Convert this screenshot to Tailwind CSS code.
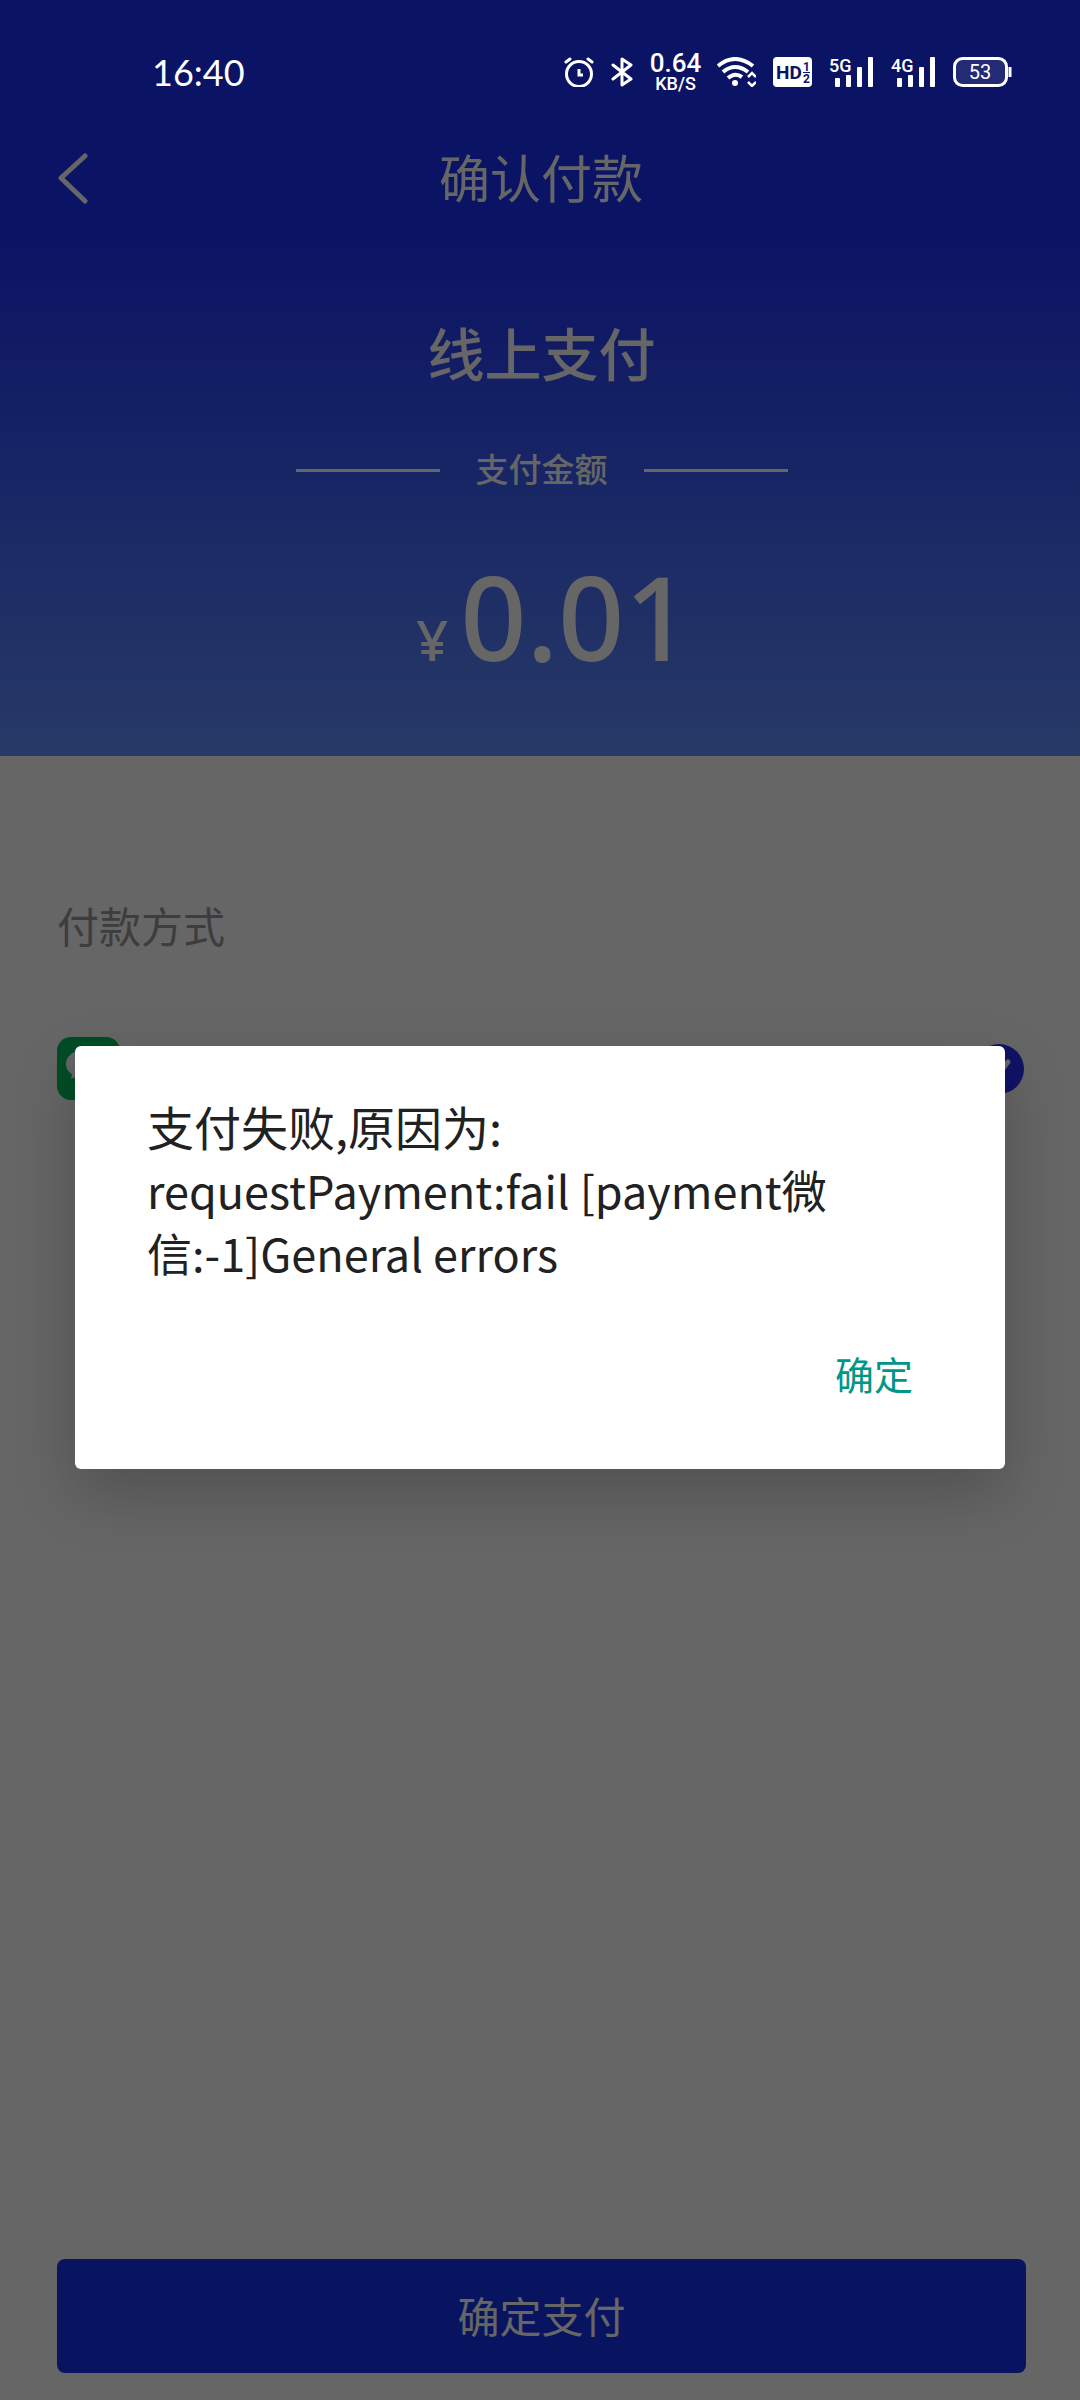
<!DOCTYPE html>
<html lang="zh-CN">
<head>
    <meta charset="UTF-8">
    <meta name="viewport" content="width=device-width, initial-scale=1.0">
    <title>确认付款</title>
    <script src="https://cdn.jsdelivr.net/npm/@tailwindcss/browser@4"></script>
</head>
<body class="bg-white font-['Noto_Sans','Noto_Sans_CJK_SC',sans-serif]">
    <div class="relative flex min-h-screen flex-col">

        <!-- Header -->
        <header class="flex h-[756px] flex-col bg-linear-to-b/srgb from-[#1b30fa] from-30% to-[#6391ff] text-white">
            <!-- Status bar, stays above the mask -->
            <div class="relative z-20 mt-10 flex h-16 items-center justify-between pr-[68px] pl-[152px]">
                <span class="font-['Lato','Noto_Sans',sans-serif] text-4xl leading-none">16:40</span>
                <div class="flex items-center gap-[17px]">
                    <svg class="h-[30px] w-[30px]" viewBox="0 0 30 30" fill="none" stroke="currentColor" stroke-width="3" stroke-linecap="round">
                        <circle cx="15" cy="17" r="12.5"/>
                        <path d="M15 12v6h4" stroke-linecap="butt"/>
                        <path d="M2 5l4-3M28 5l-4-3"/>
                    </svg>
                    <svg class="h-[30px] w-[23px]" viewBox="0 0 23 30" fill="none" stroke="currentColor" stroke-width="3" stroke-linejoin="round" stroke-linecap="round">
                        <path d="M2 8l18 14-9 6V2l9 6L2 22"/>
                    </svg>
                    <div class="flex w-[49px] flex-col items-center font-['Roboto',sans-serif] font-medium">
                        <span class="text-[26px] leading-6">0.64</span>
                        <span class="text-lg leading-[18px]">KB/S</span>
                    </div>
                    <svg class="h-[30px] w-[39px]" viewBox="0 0 39 30" fill="none" stroke="currentColor" stroke-width="4">
                        <path d="M1 9Q18-5 36 9M6 15q12-10 25 0M11 21q7-6 14-1"/>
                        <circle cx="18" cy="26" r="3" fill="currentColor" stroke="none"/>
                        <path d="M31 20l4-4 4 4M31 25l4 4 4-4" stroke-width="2.5"/>
                    </svg>
                    <svg class="h-[30px] w-[39px] font-['Roboto',sans-serif] font-bold" viewBox="0 0 39 30">
                        <rect width="39" height="30" rx="4" fill="#fff"/>
                        <text x="3" y="22" font-size="19" fill="#0b1364">HD</text>
                        <text x="30" y="14" font-size="12" fill="#0b1364">1</text>
                        <text x="30" y="26" font-size="12" fill="#0b1364">2</text>
                        <path d="M30 15.500h7" stroke="#0b1364"/>
                    </svg>
                    <svg class="h-[30px] w-[45px] overflow-visible font-['Roboto',sans-serif] font-medium" viewBox="0 0 45 30" fill="currentColor">
                        <text x="0" y="15" font-size="18">5G</text>
                        <rect x="6" y="21" width="5" height="9" rx="1"/>
                        <rect x="17" y="18" width="5" height="12" rx="1"/>
                        <rect x="28" y="10" width="5" height="20" rx="1"/>
                        <rect x="39" width="5" height="30" rx="1"/>
                    </svg>
                    <svg class="h-[30px] w-[45px] overflow-visible font-['Roboto',sans-serif] font-medium" viewBox="0 0 45 30" fill="currentColor">
                        <text x="0" y="15" font-size="18">4G</text>
                        <rect x="6" y="21" width="5" height="9" rx="1"/>
                        <rect x="17" y="18" width="5" height="12" rx="1"/>
                        <rect x="28" y="10" width="5" height="20" rx="1"/>
                        <rect x="39" width="5" height="30" rx="1"/>
                    </svg>
                    <svg class="h-[30px] w-[59px] font-['Roboto',sans-serif]" viewBox="0 0 59 30">
                        <rect x="1.5" y="1.5" width="52" height="27" rx="8" fill="#fff" fill-opacity=".1" stroke="currentColor" stroke-width="3"/>
                        <path d="M57 10v10" stroke="currentColor" stroke-width="3"/>
                        <text x="27" y="22" font-size="20" text-anchor="middle" fill="currentColor">53</text>
                    </svg>
                </div>
            </div>

            <!-- Nav bar -->
            <div class="mt-[34px] grid h-20 grid-cols-[1fr_auto_1fr] items-center pr-[54px] pl-14">
                <button type="button" aria-label="返回" class="justify-self-start">
                    <svg class="h-[52px] w-9" viewBox="0 0 36 52" fill="none" stroke="currentColor" stroke-width="5" stroke-linecap="round" stroke-linejoin="round">
                        <path d="M29 4L5 26l24 23"/>
                    </svg>
                </button>
                <h1 class="text-[51px] leading-none">确认付款</h1>
            </div>

            <!-- Amount -->
            <div class="mt-24 flex flex-col items-center pl-[3px]">
                <h2 class="text-[57px] leading-20 font-medium">线上支付</h2>
                <div class="mt-14 flex h-10 items-center gap-9">
                    <span class="h-[3px] w-36 bg-white"></span>
                    <span class="text-[33px] leading-10 font-medium">支付金额</span>
                    <span class="h-[3px] w-36 bg-white"></span>
                </div>
                <p class="mt-[66px] flex items-baseline gap-3 pl-6 leading-[120px] font-medium">
                    <span class="text-[56px]">¥</span>
                    <span class="text-[116px]">0.01</span>
                </p>
            </div>
        </header>

        <!-- Payment methods -->
        <main class="flex-1 pt-36 pr-14 pl-[57px]">
            <h3 class="text-[42px] leading-[54px] text-[#999]">付款方式</h3>
            <label class="mt-[83px] flex items-center justify-between">
                <svg class="h-16 w-16" viewBox="0 0 64 64">
                    <rect width="63" height="63" rx="14" fill="#02c061"/>
                    <path d="M27 13c-10 0-18 6-18 14 0 4 2 8 6 10l-1 5 6-3c13 3 25-2 25-12 0-8-8-14-18-14z" fill="#fff"/>
                </svg>
                <span class="relative h-[50px] w-[50px]">
                    <input type="radio" name="method" checked aria-label="微信支付" class="h-[50px] w-[50px] appearance-none rounded-full bg-[#2a30ff]">
                    <svg class="absolute inset-0" viewBox="0 0 50 50" fill="none" stroke="#fff" stroke-width="5" stroke-linecap="round">
                        <path d="M14 25l8 8 12-15"/>
                    </svg>
                </span>
            </label>
        </main>

        <footer class="pr-[54px] pb-[27px] pl-[57px]">
            <button type="button" class="h-[114px] w-full rounded-lg bg-[#1632f0] text-[42px] text-white">确定支付</button>
        </footer>

        <!-- Mask -->
        <div class="absolute inset-0 z-10 bg-black/60"></div>

        <!-- Dialog -->
        <div role="alertdialog" aria-describedby="message" class="absolute inset-x-[75px] top-[1046px] z-30 rounded-md bg-white px-[72px] pt-12 pb-16 shadow-[0_24px_64px_rgba(0,0,0,0.22)]">
            <p id="message" class="font-['Noto_Sans_CJK_SC',sans-serif] text-[45px] leading-[63px] text-[#212121]"><span class="text-[47px]">支付失败,原因为:</span><br>requestPayment:fail [payment微信:-1]General errors</p>
            <div class="mt-[61px] flex justify-end pr-5">
                <button type="button" class="text-[39px] leading-[60px] text-[#009688]">确定</button>
            </div>
        </div>
    </div>
</body>
</html>
